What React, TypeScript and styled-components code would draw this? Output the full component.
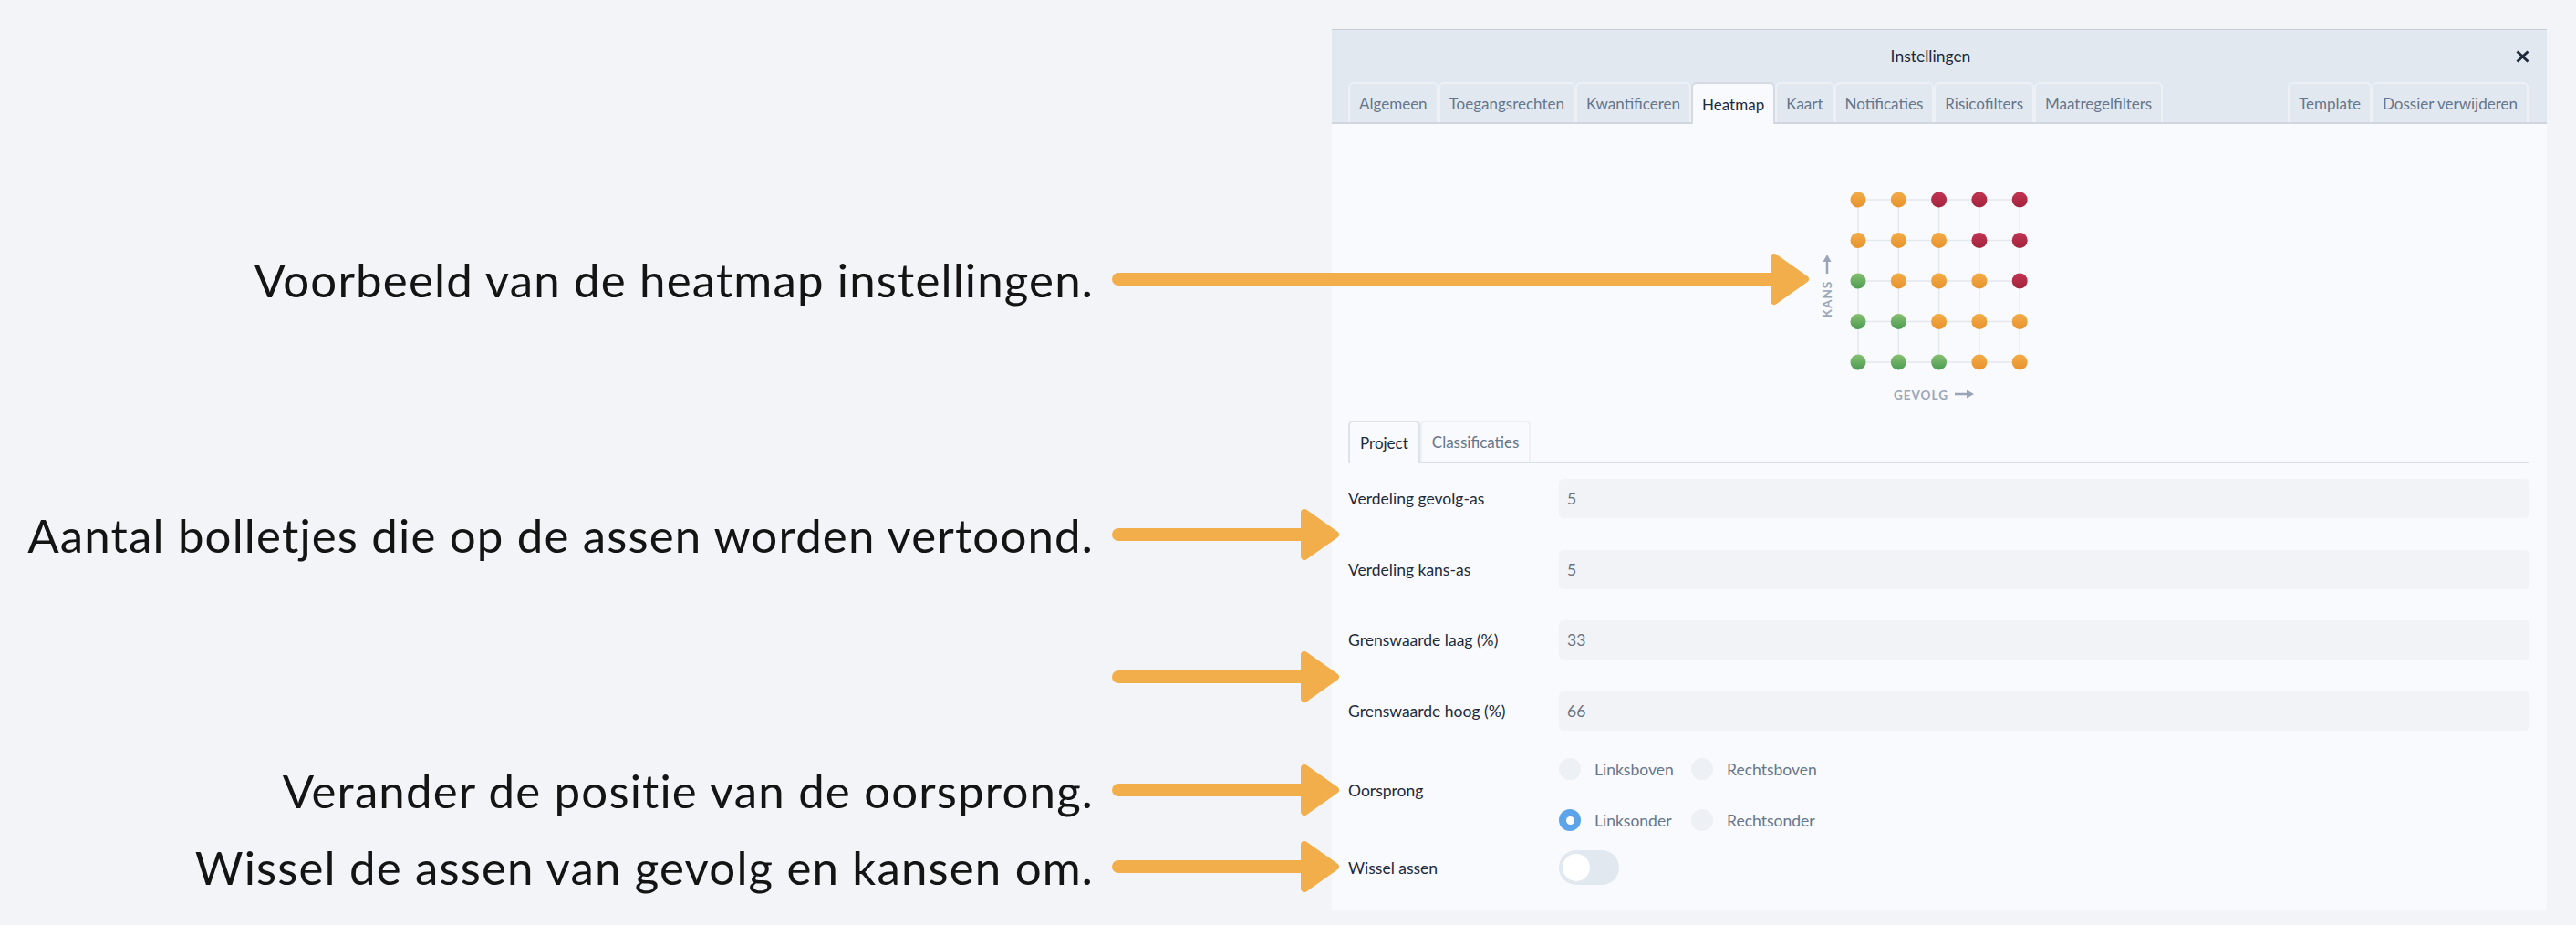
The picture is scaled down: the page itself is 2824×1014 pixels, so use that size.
import React from 'react'
import styled, { createGlobalStyle } from 'styled-components'

const GlobalStyle = createGlobalStyle`
  html, body {
    margin: 0;
    padding: 0;
    background: #f2f4f8;
  }
  body {
    font-family: Lato, "Noto Sans", sans-serif;
  }
`

const Page = styled.div`
  display: grid;
  grid-template-columns: 1460px 1332px;
  width: 2824px;
  height: 1014px;
  overflow: hidden;
`

/* left side: the callouts with arrows */

const Notes = styled.div`
  display: flex;
  flex-direction: column;
  position: relative;
  z-index: 2;
`

const CalloutRow = styled.div<{ $top: number }>`
  display: flex;
  align-items: center;
  height: 60px;
  margin-top: ${p => p.$top}px;
`

const CalloutText = styled.div`
  flex: 0 0 1199px;
  text-align: right;
  font-family: Lato, "Open Sans", sans-serif;
  font-size: 51px;
  letter-spacing: 1.15px;
  color: #141414;
  white-space: nowrap;
`

const ArrowSvg = styled.svg`
  flex: 0 0 auto;
  margin-left: 20px;
  display: block;
`

const Arrow = ({ length }: { length: number }) => (
  <ArrowSvg width={length} height={60} viewBox={`0 0 ${length} 60`}>
    <line x1={7} y1={30} x2={length - 38} y2={30} stroke='#f3ae4c' strokeWidth={14} strokeLinecap='round' />
    <polygon
      points={`${length - 38},6 ${length - 4},30 ${length - 38},54`}
      fill='#f3ae4c'
      stroke='#f3ae4c'
      strokeWidth={8}
      strokeLinejoin='round'
    />
  </ArrowSvg>
)

const Callout = ({ top, length, children }: { top: number, length: number, children?: React.ReactNode }) => (
  <CalloutRow $top={top}>
    <CalloutText>{children}</CalloutText>
    <Arrow length={length} />
  </CalloutRow>
)

/* right side: the settings dialog */

const Panel = styled.section`
  margin-top: 32px;
  height: 965px;
  background: #f8fafd;
  border-top: 1px solid #c8cdd5;
  display: flex;
  flex-direction: column;
  color: #1e293b;
`

const Header = styled.header`
  background: #e2e8f0;
`

const TitleBar = styled.div`
  display: grid;
  grid-template-columns: 1fr auto 1fr;
  align-items: center;
  height: 57px;
  padding-right: 19px;
  font-size: 17.5px;
`

const Title = styled.div`
  grid-column: 2;
  color: #1e293b;
`

const CloseButton = styled.button`
  justify-self: end;
  border: none;
  background: none;
  padding: 0;
  display: flex;
  cursor: pointer;
`

const TabBar = styled.nav`
  display: flex;
  align-items: flex-end;
  height: 44px;
  padding: 0 20px 0 18px;
  border-bottom: 2px solid #cfd6df;
`

const Tab = styled.div<{ $active?: boolean, $push?: boolean }>`
  box-sizing: border-box;
  height: ${p => (p.$active ? 46 : 44)}px;
  margin-bottom: ${p => (p.$active ? -2 : 0)}px;
  margin-left: ${p => (p.$push ? 'auto' : '0')};
  padding: 0 10px;
  display: flex;
  align-items: center;
  font-size: 17px;
  color: ${p => (p.$active ? '#1e293b' : '#66768c')};
  background: ${p => (p.$active ? '#f8fafd' : 'transparent')};
  border: 2px solid ${p => (p.$active ? '#d3dae3' : '#edf1f6')};
  border-bottom: none;
  border-radius: 6px 6px 0 0;
  white-space: nowrap;
`

const Body = styled.div`
  flex: 1;
  display: flex;
  flex-direction: column;
  padding: 0 19px 0 18px;
`

const HeatmapWrap = styled.div`
  display: flex;
  justify-content: center;
  padding-top: 63px;
`

const SubTabBar = styled.div`
  display: flex;
  height: 45px;
  margin-top: 12px;
  border-bottom: 2px solid #d9dfe7;
`

const SubTab = styled.div<{ $active?: boolean }>`
  box-sizing: border-box;
  height: ${p => (p.$active ? 47 : 45)}px;
  margin-bottom: ${p => (p.$active ? -2 : 0)}px;
  padding: 0 11px;
  display: flex;
  align-items: center;
  font-size: 17px;
  color: ${p => (p.$active ? '#1e293b' : '#66768c')};
  background: #f8fafd;
  border: 2px solid ${p => (p.$active ? '#dde3ea' : '#eef1f5')};
  border-bottom: none;
  border-radius: 5px 5px 0 0;
`

const FieldRow = styled.div<{ $top: number }>`
  display: grid;
  grid-template-columns: 231px 1fr;
  align-items: center;
  margin-top: ${p => p.$top}px;
`

const Label = styled.label<{ $lift?: number }>`
  font-size: 17.5px;
  color: #1e293b;
  margin-bottom: ${p => p.$lift ?? 0}px;
`

const Input = styled.input`
  box-sizing: border-box;
  height: 43px;
  width: 100%;
  border: none;
  border-radius: 5px;
  background: #f1f3f7;
  padding: 0 9px;
  font-family: Lato, "Noto Sans", sans-serif;
  font-size: 17.5px;
  color: #6b7280;
  outline: none;
`

const RadioGrid = styled.div`
  display: grid;
  grid-template-columns: 145px auto;
  grid-auto-rows: 28px;
  row-gap: 28px;
  justify-content: start;
`

const RadioOption = styled.div`
  display: flex;
  align-items: center;
  gap: 15px;
  font-size: 17.5px;
  color: #66768c;
`

const RadioDot = styled.span<{ $checked?: boolean }>`
  width: 24px;
  height: 24px;
  border-radius: 50%;
  background: ${p => (p.$checked ? '#5ba4ea' : '#edf0f5')};
  display: flex;
  align-items: center;
  justify-content: center;
  &::after {
    content: '';
    width: 9px;
    height: 9px;
    border-radius: 50%;
    background: ${p => (p.$checked ? '#ffffff' : 'transparent')};
  }
`

const Toggle = styled.div`
  box-sizing: border-box;
  width: 66px;
  height: 38px;
  border-radius: 19px;
  background: #e2e8f0;
  padding: 4px;
  display: flex;
`

const Knob = styled.span`
  width: 30px;
  height: 30px;
  border-radius: 50%;
  background: #ffffff;
`

type Level = 'o' | 'r' | 'g'

const matrix: Level[][] = [
  ['o', 'o', 'r', 'r', 'r'],
  ['o', 'o', 'o', 'r', 'r'],
  ['g', 'o', 'o', 'o', 'r'],
  ['g', 'g', 'o', 'o', 'o'],
  ['g', 'g', 'g', 'o', 'o']
]

const xs = [47, 91.3, 135.6, 179.9, 224.2]
const ys = [20, 64.5, 109, 153.5, 198]

const Heatmap = () => (
  <svg width={272} height={250} viewBox='0 0 272 250'>
    <defs>
      <linearGradient id='gO' x1='0' y1='0' x2='0' y2='1'>
        <stop offset='0' stopColor='#f3ac47' />
        <stop offset='1' stopColor='#e7922d' />
      </linearGradient>
      <linearGradient id='gR' x1='0' y1='0' x2='0' y2='1'>
        <stop offset='0' stopColor='#c23552' />
        <stop offset='1' stopColor='#a1233d' />
      </linearGradient>
      <linearGradient id='gG' x1='0' y1='0' x2='0' y2='1'>
        <stop offset='0' stopColor='#88c172' />
        <stop offset='1' stopColor='#4a9a52' />
      </linearGradient>
    </defs>
    {ys.map(y => (
      <line key={'h' + y} x1={xs[0]} y1={y} x2={xs[4]} y2={y} stroke='#e4e8ef' strokeWidth={1.5} />
    ))}
    {xs.map(x => (
      <line key={'v' + x} x1={x} y1={ys[0]} x2={x} y2={ys[4]} stroke='#e4e8ef' strokeWidth={1.5} />
    ))}
    {matrix.map((row, j) =>
      row.map((lvl, i) => (
        <circle
          key={`${i}-${j}`}
          cx={xs[i]}
          cy={ys[j]}
          r={8.5}
          fill={lvl === 'o' ? 'url(#gO)' : lvl === 'r' ? 'url(#gR)' : 'url(#gG)'}
        />
      ))
    )}
    <text
      x={13}
      y={129}
      transform='rotate(-90 13 129)'
      textAnchor='middle'
      dominantBaseline='central'
      fontFamily='Lato, sans-serif'
      fontSize={13.5}
      fontWeight={700}
      letterSpacing={1}
      fill='#9aa6b8'
    >
      KANS
    </text>
    <line x1={13} y1={101} x2={13} y2={87} stroke='#9aa6b8' strokeWidth={2.5} />
    <polygon points='13,80 8.5,88 17.5,88' fill='#9aa6b8' />
    <text
      x={116}
      y={234}
      textAnchor='middle'
      dominantBaseline='central'
      fontFamily='Lato, sans-serif'
      fontSize={13.5}
      fontWeight={700}
      letterSpacing={1}
      fill='#9aa6b8'
    >
      GEVOLG
    </text>
    <line x1={153} y1={233} x2={167} y2={233} stroke='#9aa6b8' strokeWidth={2.5} />
    <polygon points='174,233 166,228.5 166,237.5' fill='#9aa6b8' />
  </svg>
)

const CloseIcon = () => (
  <svg width={15} height={14} viewBox='0 0 15 14'>
    <path d='M1.5 1.5 L13.5 12.5 M13.5 1.5 L1.5 12.5' stroke='#1e293b' strokeWidth={3} strokeLinecap='butt' />
  </svg>
)

const mainTabs = ['Algemeen', 'Toegangsrechten', 'Kwantificeren', 'Heatmap', 'Kaart', 'Notificaties', 'Risicofilters', 'Maatregelfilters']

const fields = [
  { label: 'Verdeling gevolg-as', value: '5', top: 17 },
  { label: 'Verdeling kans-as', value: '5', top: 35 },
  { label: 'Grenswaarde laag (%)', value: '33', top: 34 },
  { label: 'Grenswaarde hoog (%)', value: '66', top: 35 }
]

const App = () => {
  return (
    <>
      <GlobalStyle />
      <Page>
        <Notes>
          <Callout top={276} length={764}>Voorbeeld van de heatmap instellingen.</Callout>
          <Callout top={220} length={249}>Aantal bolletjes die op de assen worden vertoond.</Callout>
          <Callout top={96} length={249} />
          <Callout top={64} length={249}>Verander de positie van de oorsprong.</Callout>
          <Callout top={24} length={249}>Wissel de assen van gevolg en kansen om.</Callout>
        </Notes>

        <Panel>
          <Header>
            <TitleBar>
              <Title>Instellingen</Title>
              <CloseButton aria-label='Sluiten'><CloseIcon /></CloseButton>
            </TitleBar>
            <TabBar>
              {mainTabs.map(t => (
                <Tab key={t} $active={t === 'Heatmap'}>{t}</Tab>
              ))}
              <Tab $push>Template</Tab>
              <Tab>Dossier verwijderen</Tab>
            </TabBar>
          </Header>

          <Body>
            <HeatmapWrap>
              <Heatmap />
            </HeatmapWrap>

            <SubTabBar>
              <SubTab $active>Project</SubTab>
              <SubTab>Classificaties</SubTab>
            </SubTabBar>

            {fields.map(f => (
              <FieldRow key={f.label} $top={f.top}>
                <Label>{f.label}</Label>
                <Input readOnly value={f.value} />
              </FieldRow>
            ))}

            <FieldRow $top={28}>
              <Label $lift={10}>Oorsprong</Label>
              <RadioGrid>
                <RadioOption><RadioDot />Linksboven</RadioOption>
                <RadioOption><RadioDot />Rechtsboven</RadioOption>
                <RadioOption><RadioDot $checked />Linksonder</RadioOption>
                <RadioOption><RadioDot />Rechtsonder</RadioOption>
              </RadioGrid>
            </FieldRow>

            <FieldRow $top={19}>
              <Label>Wissel assen</Label>
              <Toggle><Knob /></Toggle>
            </FieldRow>
          </Body>
        </Panel>
      </Page>
    </>
  )
}

export default App
